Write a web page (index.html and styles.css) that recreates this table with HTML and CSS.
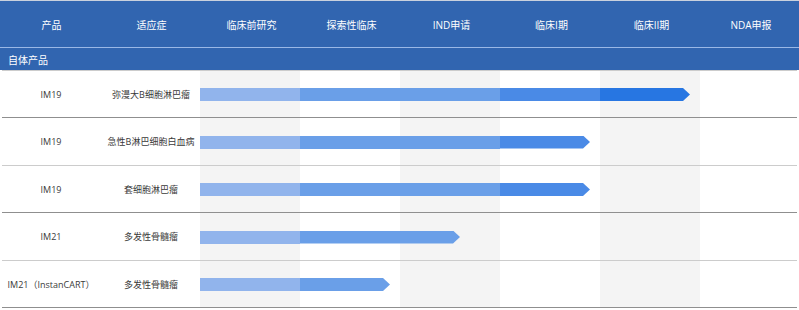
FILE: index.html
```html
<!DOCTYPE html>
<html lang="zh-CN">
<head>
<meta charset="utf-8">
<link rel="stylesheet" href="styles.css">
</head>
<body>
<div class="pipeline">
  <div class="head">
    <div class="hcell">产品</div>
    <div class="hcell">适应症</div>
    <div class="hcell">临床前研究</div>
    <div class="hcell">探索性临床</div>
    <div class="hcell">IND申请</div>
    <div class="hcell">临床I期</div>
    <div class="hcell">临床II期</div>
    <div class="hcell">NDA申报</div>
  </div>
  <div class="group">自体产品</div>
  <div class="rows">
    <div class="row">
      <div class="cell name">IM19</div>
      <div class="cell ind">弥漫大B细胞淋巴瘤</div>
      <div class="cell shade c3"></div>
      <div class="cell c4"></div>
      <div class="cell shade c5"></div>
      <div class="cell c6"></div>
      <div class="cell shade c7"></div>
      <div class="cell c8"></div>
      <div class="bar">
        <span class="seg s1" style="width:100px"></span>
        <span class="seg s2" style="width:200px"></span>
        <span class="seg s3" style="width:100px"></span>
        <span class="seg s4 tip" style="width:90px"></span>
      </div>
    </div>
    <div class="row">
      <div class="cell name">IM19</div>
      <div class="cell ind">急性B淋巴细胞白血病</div>
      <div class="cell shade c3"></div>
      <div class="cell c4"></div>
      <div class="cell shade c5"></div>
      <div class="cell c6"></div>
      <div class="cell shade c7"></div>
      <div class="cell c8"></div>
      <div class="bar">
        <span class="seg s1" style="width:100px"></span>
        <span class="seg s2" style="width:200px"></span>
        <span class="seg s3 tip" style="width:90px"></span>
      </div>
    </div>
    <div class="row">
      <div class="cell name">IM19</div>
      <div class="cell ind">套细胞淋巴瘤</div>
      <div class="cell shade c3"></div>
      <div class="cell c4"></div>
      <div class="cell shade c5"></div>
      <div class="cell c6"></div>
      <div class="cell shade c7"></div>
      <div class="cell c8"></div>
      <div class="bar">
        <span class="seg s1" style="width:100px"></span>
        <span class="seg s2" style="width:200px"></span>
        <span class="seg s3 tip" style="width:90px"></span>
      </div>
    </div>
    <div class="row">
      <div class="cell name">IM21</div>
      <div class="cell ind">多发性骨髓瘤</div>
      <div class="cell shade c3"></div>
      <div class="cell c4"></div>
      <div class="cell shade c5"></div>
      <div class="cell c6"></div>
      <div class="cell shade c7"></div>
      <div class="cell c8"></div>
      <div class="bar">
        <span class="seg s1" style="width:100px"></span>
        <span class="seg s2 tip" style="width:160px"></span>
      </div>
    </div>
    <div class="row">
      <div class="cell name">IM21（InstanCART）</div>
      <div class="cell ind">多发性骨髓瘤</div>
      <div class="cell shade c3"></div>
      <div class="cell c4"></div>
      <div class="cell shade c5"></div>
      <div class="cell c6"></div>
      <div class="cell shade c7"></div>
      <div class="cell c8"></div>
      <div class="bar">
        <span class="seg s1" style="width:100px"></span>
        <span class="seg s2 tip" style="width:90px"></span>
      </div>
    </div>
  </div>
</div>
</body>
</html>
```

FILE: styles.css
```css
html, body {
  margin: 0;
  padding: 0;
  background: #ffffff;
}
body {
  font-family: "Open Sans", "Noto Sans CJK SC", sans-serif;
  width: 799px;
  height: 310px;
  overflow: hidden;
}
.pipeline {
  width: 799px;
}
.head {
  display: grid;
  grid-template-columns: repeat(7, 100px) 99px;
  height: 46px;
  background: #3165b0;
  border-top: 1px solid #c9d1de;
  border-bottom: 1px solid #9ab8e6;
}
.hcell {
  display: flex;
  align-items: center;
  justify-content: center;
  padding-left: 3px;
  color: #ffffff;
  font-size: 10px;
}
.group {
  height: 22px;
  background: #3165b0;
  color: #ffffff;
  font-size: 10px;
  display: flex;
  align-items: center;
  padding-left: 8px;
}
.rows {
  padding-top: 1px;
  background: linear-gradient(#cccccc, #cccccc) 2px 0 / 795px 1px no-repeat;
}
.row {
  display: grid;
  grid-template-columns: repeat(7, 100px) 99px;
  grid-template-rows: 46px;
  padding-bottom: 1px;
  background: linear-gradient(#8f8f8f, #8f8f8f) 2px 100% / 795px 1px no-repeat;
}
.row:nth-child(even) {
  grid-template-rows: 47px;
  background-image: linear-gradient(#cccccc, #cccccc);
}
.cell {
  grid-row: 1;
  display: flex;
  align-items: center;
  justify-content: center;
  color: #3a3a3a;
  font-size: 9px;
}
.name { grid-column: 1; padding-left: 2px; }
.ind { grid-column: 2; padding-left: 2px; }
.c3 { grid-column: 3; }
.c4 { grid-column: 4; }
.c5 { grid-column: 5; }
.c6 { grid-column: 6; }
.c7 { grid-column: 7; }
.c8 { grid-column: 8; }
.shade {
  background: #f4f4f4;
}
.bar {
  grid-row: 1;
  grid-column: 3 / 9;
  align-self: center;
  display: flex;
  height: 13px;
  margin-top: 1px;
}
.seg {
  display: block;
  height: 100%;
}
.s1 { background: #91b4ec; }
.s2 { background: #6a9fe8; }
.s3 { background: #4a8ae6; }
.s4 { background: #2776e2; }
.tip {
  clip-path: polygon(0 0, calc(100% - 7px) 0, 100% 50%, calc(100% - 7px) 100%, 0 100%);
}
```
